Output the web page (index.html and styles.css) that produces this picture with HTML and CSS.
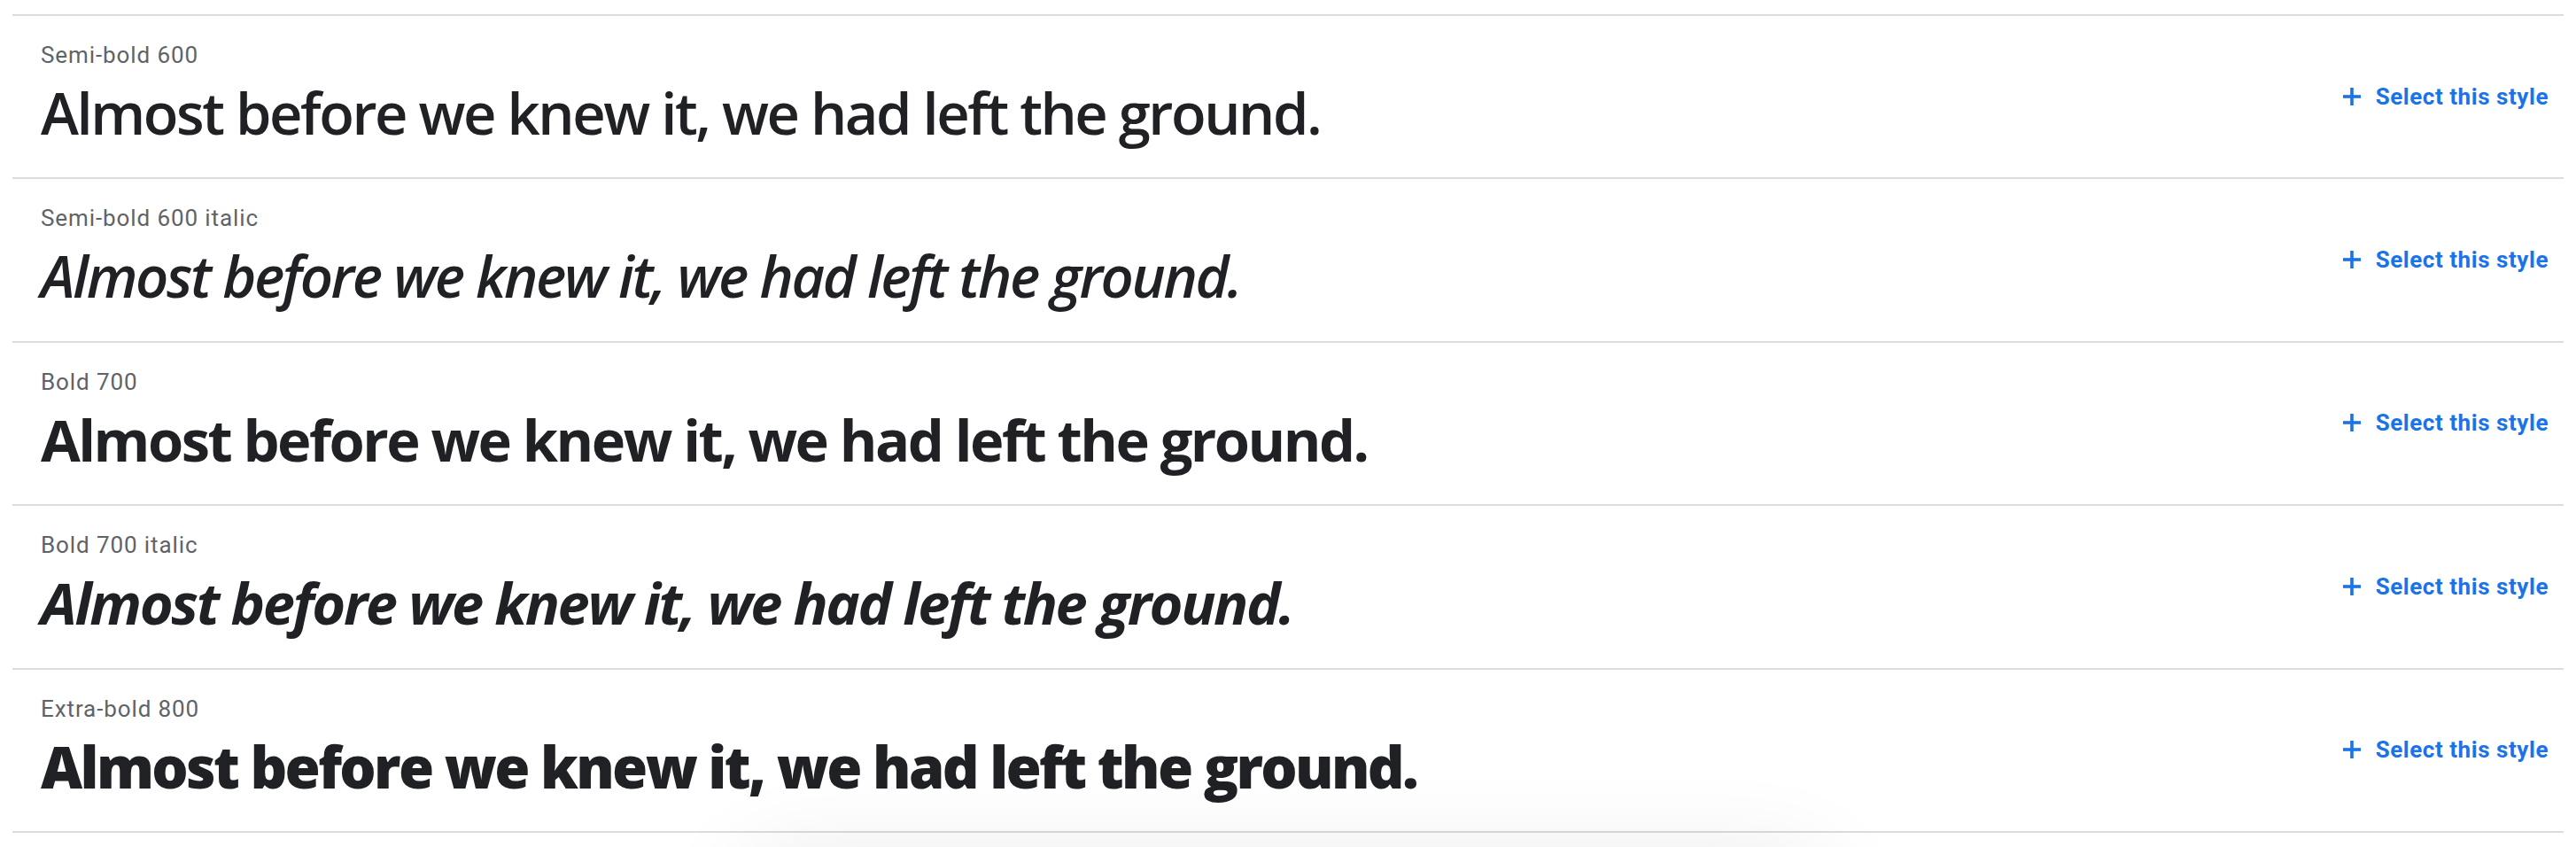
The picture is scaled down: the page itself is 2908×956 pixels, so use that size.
FILE: index.html
```html
<!DOCTYPE html>
<html lang="en">
<head>
<meta charset="utf-8">
<title>Styles</title>
<link rel="stylesheet" href="styles.css">
</head>
<body>
<div class="list">
  <div class="row">
    <div class="info">
      <div class="label">Semi-bold 600</div>
      <div class="sample w600">Almost before we knew it, we had left the ground.</div>
    </div>
    <button class="select"><svg class="plus" viewBox="0 0 20 20"><rect x="8.2" y="0" width="3.6" height="20"/><rect x="0" y="8.2" width="20" height="3.6"/></svg><span>Select this style</span></button>
  </div>
  <div class="row">
    <div class="info">
      <div class="label">Semi-bold 600 italic</div>
      <div class="sample w600 it">Almost before we knew it, we had left the ground.</div>
    </div>
    <button class="select"><svg class="plus" viewBox="0 0 20 20"><rect x="8.2" y="0" width="3.6" height="20"/><rect x="0" y="8.2" width="20" height="3.6"/></svg><span>Select this style</span></button>
  </div>
  <div class="row">
    <div class="info">
      <div class="label">Bold 700</div>
      <div class="sample w700">Almost before we knew it, we had left the ground.</div>
    </div>
    <button class="select"><svg class="plus" viewBox="0 0 20 20"><rect x="8.2" y="0" width="3.6" height="20"/><rect x="0" y="8.2" width="20" height="3.6"/></svg><span>Select this style</span></button>
  </div>
  <div class="row">
    <div class="info">
      <div class="label">Bold 700 italic</div>
      <div class="sample w700 it">Almost before we knew it, we had left the ground.</div>
    </div>
    <button class="select"><svg class="plus" viewBox="0 0 20 20"><rect x="8.2" y="0" width="3.6" height="20"/><rect x="0" y="8.2" width="20" height="3.6"/></svg><span>Select this style</span></button>
  </div>
  <div class="row">
    <div class="info">
      <div class="label">Extra-bold 800</div>
      <div class="sample w800">Almost before we knew it, we had left the ground.</div>
    </div>
    <button class="select"><svg class="plus" viewBox="0 0 20 20"><rect x="8.2" y="0" width="3.6" height="20"/><rect x="0" y="8.2" width="20" height="3.6"/></svg><span>Select this style</span></button>
  </div>
</div>
<div class="shade-clip"><div class="floating-shadow"></div></div>
</body>
</html>
```
FILE: styles.css
```css
html, body {
  margin: 0;
  padding: 0;
  background: #ffffff;
  overflow: hidden;
  height: 956px;
}
body {
  position: relative;
  font-family: Roboto, "Liberation Sans", Arial, sans-serif;
}
.list {
  margin: 16px 14px 0 14px;
  border-top: 2px solid #dadce0;
}
.row {
  display: flex;
  align-items: center;
  justify-content: space-between;
  padding: 26px 17px 27.4px 32px;
  border-bottom: 2px solid #dadce0;
}
.info {
  display: flex;
  flex-direction: column;
  gap: 2px;
}
.label {
  font-family: Roboto, "Liberation Sans", Arial, sans-serif;
  font-size: 26px;
  line-height: 36px;
  letter-spacing: 0.9px;
  color: #5f6368;
}
.sample {
  font-family: "Open Sans", "Liberation Sans", Arial, sans-serif;
  font-size: 65px;
  line-height: 91px;
  color: #202124;
  white-space: nowrap;
}
.w600 { font-weight: 600; letter-spacing: -2.43px; }
.w600.it { letter-spacing: -2.39px; }
.w700 { font-weight: 700; letter-spacing: -2.53px; }
.w700.it { letter-spacing: -2.41px; }
.w800 { font-weight: 800; letter-spacing: -2.65px; }
.it { font-style: italic; }
.select {
  display: flex;
  align-items: center;
  gap: 17px;
  border: 0;
  background: none;
  padding: 0;
  margin: 0;
  color: #1a73e8;
  font-family: Roboto, "Liberation Sans", Arial, sans-serif;
  font-size: 26px;
  font-weight: 700;
  letter-spacing: 0.55px;
  line-height: 36px;
  cursor: pointer;
}
.plus {
  width: 20px;
  height: 20px;
  fill: #1a73e8;
  display: block;
}
.shade-clip {
  position: absolute;
  left: 0;
  right: 0;
  bottom: 0;
  height: 160px;
  overflow: hidden;
  pointer-events: none;
}
.floating-shadow {
  position: absolute;
  left: 860px;
  width: 1180px;
  top: 194px;
  height: 120px;
  border-radius: 16px;
  box-shadow: 0 0 110px 20px rgba(0, 0, 0, 0.09);
  background: #fff;
}
```
